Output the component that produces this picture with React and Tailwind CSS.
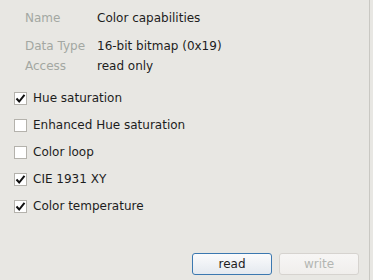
const fields = [
  { label: "Name", value: "Color capabilities", cls: "h-[20px] mt-[8px]" },
  { label: "Data Type", value: "16-bit bitmap (0x19)", cls: "h-[20px] mt-[8px]" },
  { label: "Access", value: "read only", cls: "h-[20px]" },
];

const caps = [
  { name: "Hue saturation", on: true },
  { name: "Enhanced Hue saturation", on: false },
  { name: "Color loop", on: false },
  { name: "CIE 1931 XY", on: true },
  { name: "Color temperature", on: true },
];

function Check({ on }) {
  return (
    <div className="w-[13px] h-[13px] border border-[#b4b2ac] bg-white flex items-center justify-center">
      {on && (
        <svg width="11" height="11" viewBox="0 0 11 11">
          <path d="M1.5 5.5 L4.2 8.5 L9.5 1.8" fill="none" stroke="#111" strokeWidth="2" />
        </svg>
      )}
    </div>
  );
}

export default function App() {
  return (
    <div
      className="w-[373px] h-[280px] bg-[#e8e7e3] text-[12px] text-[#1d1d1d] flex"
      style={{ fontFamily: '"DejaVu Sans", sans-serif' }}
    >
      <div className="w-[370px] h-full flex flex-col border-r border-[#c9c8c3]">
        <div className="pl-[25px]">
          {fields.map((f) => (
            <div key={f.label} className={`flex items-center ${f.cls}`}>
              <div className="w-[72px] text-[#a3a7a2]">{f.label}</div>
              <div>{f.value}</div>
            </div>
          ))}
        </div>
        <div className="pl-[14px] mt-[12px] grid gap-[7px]">
          {caps.map((c) => (
            <label key={c.name} className="flex items-center gap-[6px] h-[20px]">
              <Check on={c.on} />
              <span>{c.name}</span>
            </label>
          ))}
        </div>
        <div className="mt-auto mb-[5px] flex justify-end gap-[7px] pr-[10px]">
          <button className="w-[80px] h-[22px] rounded-[3px] border border-[#3b78b0] bg-gradient-to-b from-[#fbfbfc] to-[#e4e9ef] text-[#1d1d1d]">
            read
          </button>
          <button
            disabled
            className="w-[80px] h-[22px] rounded-[3px] border border-[#d6d3cf] bg-gradient-to-b from-[#f7f6f5] to-[#f0eeec] text-[#b3b6b2]"
          >
            write
          </button>
        </div>
      </div>
    </div>
  );
}
